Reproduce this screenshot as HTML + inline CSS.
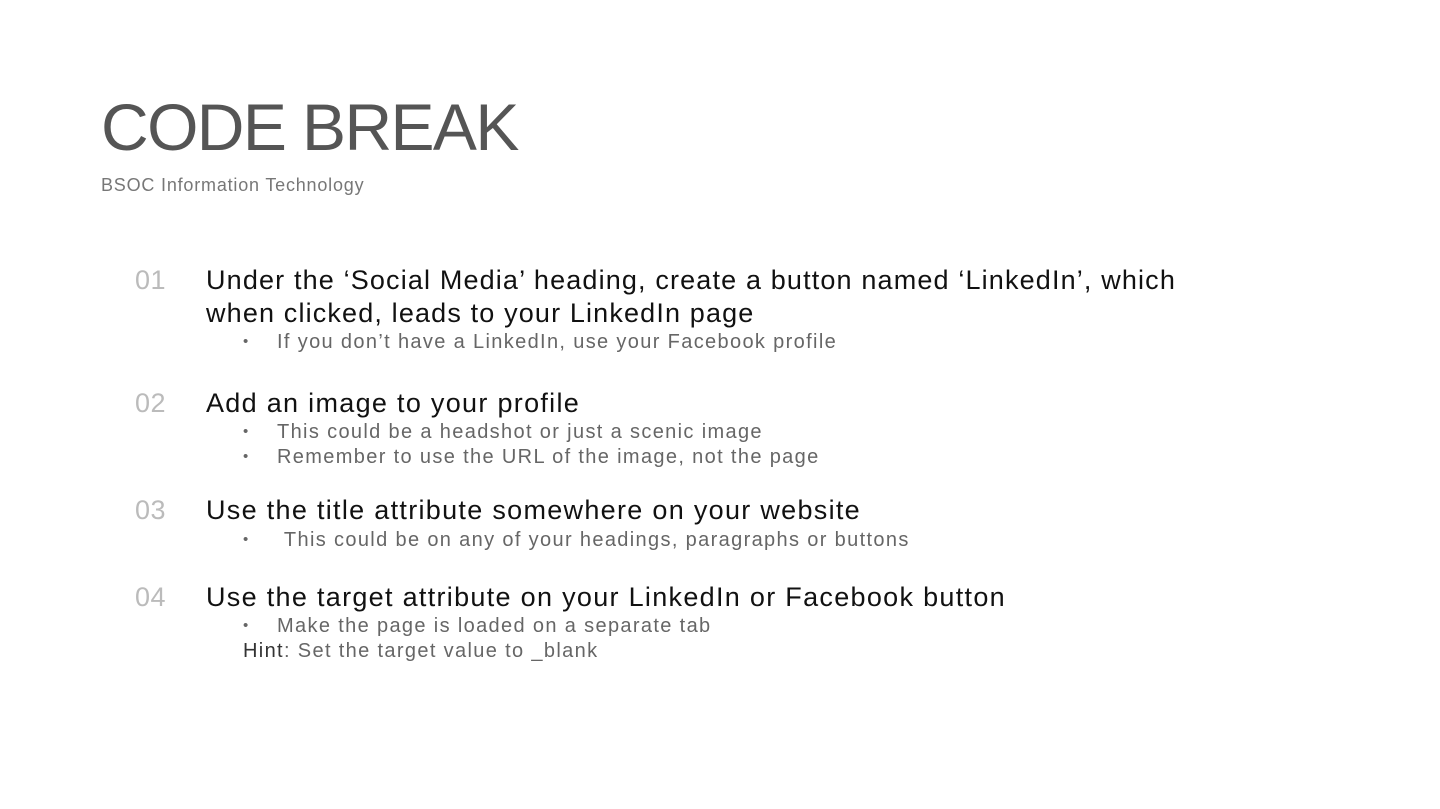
<!DOCTYPE html>
<html><head><meta charset="utf-8"><style>
body{margin:0;width:1440px;height:809px;background:#fff;font-family:"Liberation Sans",sans-serif;position:relative;overflow:hidden}
.a{position:absolute;white-space:nowrap}
.t{left:101px;top:89px;font-size:66px;color:#555;letter-spacing:-1.6px}
.s{left:101px;top:175px;font-size:18px;color:#777;letter-spacing:0.8px}
.n{left:135px;font-size:27px;color:#bbb;letter-spacing:0.5px}
.h{left:206px;font-size:27px;color:#111;letter-spacing:1.3px}
.b{left:243px;font-size:20px;color:#666;letter-spacing:1.35px}
.b span{display:inline-block;width:34px;font-size:15px;vertical-align:2px}
</style></head><body>
<div class="a t">CODE BREAK</div>
<div class="a s">BSOC Information Technology</div>
<div class="a n" style="top:265px">01</div>
<div class="a h" style="top:265px;letter-spacing:1.15px">Under the ‘Social Media’ heading, create a button named ‘LinkedIn’, which</div>
<div class="a h" style="top:298px;letter-spacing:1.15px">when clicked, leads to your LinkedIn page</div>
<div class="a b" style="top:331px"><span>•</span>If you don’t have a LinkedIn, use your Facebook profile</div>
<div class="a n" style="top:388px">02</div>
<div class="a h" style="top:388px">Add an image to your profile</div>
<div class="a b" style="top:421px"><span>•</span>This could be a headshot or just a scenic image</div>
<div class="a b" style="top:446px"><span>•</span>Remember to use the URL of the image, not the page</div>
<div class="a n" style="top:495px">03</div>
<div class="a h" style="top:495px">Use the title attribute somewhere on your website</div>
<div class="a b" style="top:529px"><span>•</span>&nbsp;This could be on any of your headings, paragraphs or buttons</div>
<div class="a n" style="top:582px">04</div>
<div class="a h" style="top:582px">Use the target attribute on your LinkedIn or Facebook button</div>
<div class="a b" style="top:615px"><span>•</span>Make the page is loaded on a separate tab</div>
<div class="a b" style="top:640px"><b style="font-weight:normal;color:#333">Hint</b>: Set the target value to _blank</div>
</body></html>
